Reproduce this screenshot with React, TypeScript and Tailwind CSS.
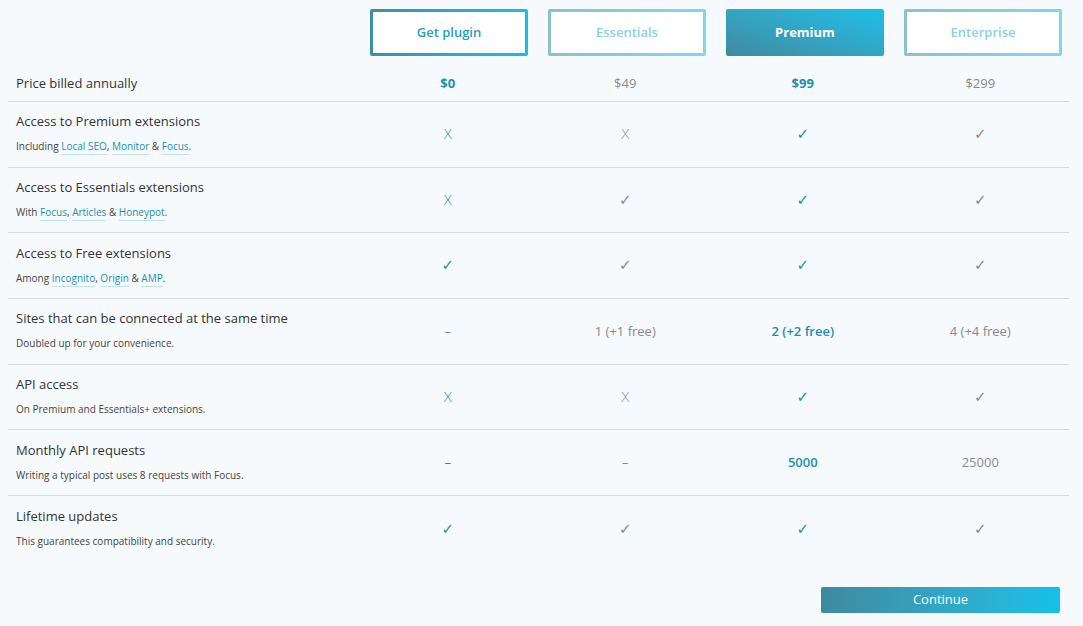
import React from "react";

const teal = "text-[#1a8fae]";
const L = ({ t }: { t: string }) => (
  <span className="text-[#1a8fae] border-b border-[#bfe3ee] pb-[1px]">{t}</span>
);

type Cell = { v: string; s: "b" | "g" };
const rows: { title: string; sub: React.ReactNode; cells: Cell[] }[] = [
  { title: "Access to Premium extensions", sub: <>Including <L t="Local SEO" />, <L t="Monitor" /> &amp; <L t="Focus" />.</>, cells: [{ v: "✗", s: "b" }, { v: "✗", s: "g" }, { v: "✓", s: "b" }, { v: "✓", s: "g" }] },
  { title: "Access to Essentials extensions", sub: <>With <L t="Focus" />, <L t="Articles" /> &amp; <L t="Honeypot" />.</>, cells: [{ v: "✗", s: "b" }, { v: "✓", s: "g" }, { v: "✓", s: "b" }, { v: "✓", s: "g" }] },
  { title: "Access to Free extensions", sub: <>Among <L t="Incognito" />, <L t="Origin" /> &amp; <L t="AMP" />.</>, cells: [{ v: "✓", s: "b" }, { v: "✓", s: "g" }, { v: "✓", s: "b" }, { v: "✓", s: "g" }] },
  { title: "Sites that can be connected at the same time", sub: "Doubled up for your convenience.", cells: [{ v: "–", s: "g" }, { v: "1 (+1 free)", s: "g" }, { v: "2 (+2 free)", s: "b" }, { v: "4 (+4 free)", s: "g" }] },
  { title: "API access", sub: "On Premium and Essentials+ extensions.", cells: [{ v: "✗", s: "b" }, { v: "✗", s: "g" }, { v: "✓", s: "b" }, { v: "✓", s: "g" }] },
  { title: "Monthly API requests", sub: "Writing a typical post uses 8 requests with Focus.", cells: [{ v: "–", s: "b" }, { v: "–", s: "g" }, { v: "5000", s: "b" }, { v: "25000", s: "g" }] },
  { title: "Lifetime updates", sub: "This guarantees compatibility and security.", cells: [{ v: "✓", s: "b" }, { v: "✓", s: "g" }, { v: "✓", s: "b" }, { v: "✓", s: "g" }] },
];

function Val({ c, i }: { c: Cell; i: number }) {
  const bold = c.s === "b" && i === 2 && c.v.length > 1;
  const cls = c.s === "b" ? teal : "text-[#8a8a8a]";
  let content: React.ReactNode = c.v;
  if (c.v === "✗") content = <span className="font-light text-[14px]" style={{ fontFamily: '"DejaVu Sans", sans-serif' }}>X</span>;
  if (c.v === "✓") content = <span className="text-[15px]" style={{ fontFamily: '"DejaVu Sans", sans-serif' }}>✓</span>;
  return <div className={`w-[178px] text-center text-[13px] ${cls} ${bold ? "font-semibold" : ""}`}>{content}</div>;
}

export default function App() {
  return (
    <div className="w-[1083px] h-[626px] bg-[#f7fafc] text-[#333] pl-2 pt-[9px]" style={{ fontFamily: '"Open Sans", "Noto Sans", sans-serif' }}>
      <div className="flex pl-[1px]">
        <div className="w-[351px]" />
        <div className="w-[178px] px-[10px]"><div className="h-[47px] rounded-[2px] p-[3px] bg-gradient-to-r from-[#3a8fa5] to-[#14bfe6]"><div className="h-full bg-white flex items-center justify-center text-[13px] font-semibold text-[#2a9dbf]">Get plugin</div></div></div>
        <div className="w-[178px] px-[10px]"><div className="h-[47px] rounded-[2px] p-[3px] bg-gradient-to-r from-[#8cc0cc] to-[#7fd8ee]"><div className="h-full bg-white flex items-center justify-center text-[13px] font-semibold text-[#8ed0e2]">Essentials</div></div></div>
        <div className="w-[178px] px-[10px]"><div className="h-[47px] rounded-[2px] bg-gradient-to-tr from-[#3e8a9f] to-[#12c1ea] flex items-center justify-center text-[13px] font-bold text-white">Premium</div></div>
        <div className="w-[178px] px-[10px]"><div className="h-[47px] rounded-[2px] p-[3px] bg-gradient-to-r from-[#8cc0cc] to-[#7fd8ee]"><div className="h-full bg-white flex items-center justify-center text-[13px] font-semibold text-[#8ed0e2]">Enterprise</div></div></div>
      </div>
      <div className="w-[1061px]">
        <div className="flex items-center h-[36px] mt-[10px] border-b border-[#d6dadd]">
          <div className="w-[352px] pl-2 text-[13px]">Price billed annually</div>
          <div className={`w-[178px] text-center text-[13px] font-bold ${teal}`}>$0</div>
          <div className="w-[178px] text-center text-[13px] text-[#8a8a8a]">$49</div>
          <div className={`w-[178px] text-center text-[13px] font-bold ${teal}`}>$99</div>
          <div className="w-[178px] text-center text-[13px] text-[#8a8a8a]">$299</div>
        </div>
        {rows.map((r, k) => (
          <div key={k} className={`flex items-center h-[65.7px] ${k < rows.length - 1 ? "border-b border-[#d6dadd]" : ""}`}>
            <div className="w-[352px] pl-2 -mt-[3px]">
              <div className="text-[13px] leading-[18px]">{r.title}</div>
              <div className="text-[10px] mt-[9px] leading-[14px] text-[#444]">{r.sub}</div>
            </div>
            {r.cells.map((c, i) => <Val key={i} c={c} i={i} />)}
          </div>
        ))}
      </div>
      <div className="flex justify-end w-[1052px] mt-[25px]">
        <div className="w-[239px] h-[26px] rounded-[2px] bg-gradient-to-r from-[#3e8a9f] to-[#12c1ea] text-white text-[13px] flex items-center justify-center">Continue</div>
      </div>
    </div>
  );
}
